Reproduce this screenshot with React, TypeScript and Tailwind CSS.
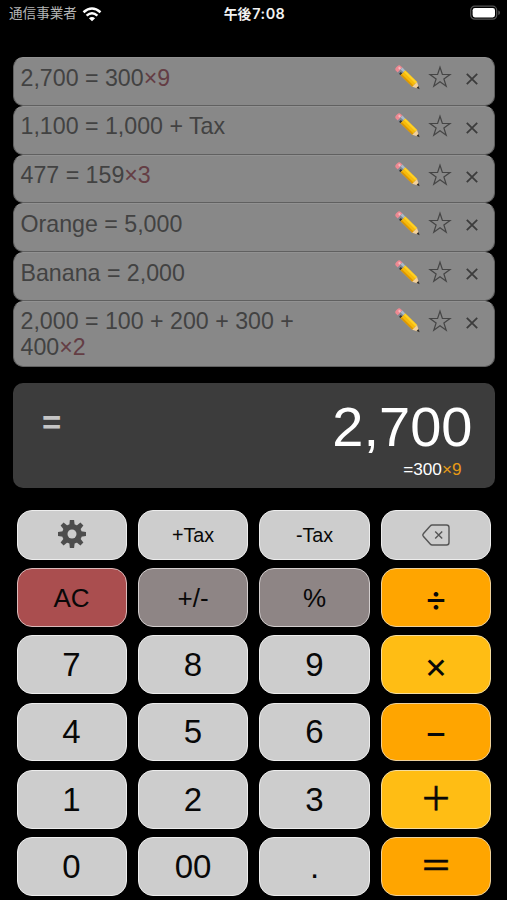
import type { ReactNode } from "react";

const jp = "font-['Liberation_Sans','Noto_Sans_CJK_JP',sans-serif]";

function Pencil() {
  return (
    <svg viewBox="0 0 26 26" className="h-[26px] w-[26px]" aria-hidden="true">
      <g transform="translate(2.2 2.2) rotate(44.5)">
        <path d="M2-3.4H4.5V3.4H2A2.5 2.5 0 0 1-.6.8V-.8A2.5 2.5 0 0 1 2-3.4Z" fill="#ed8992" />
        <path d="M1.2-1.8H3.5V0H1.2Z" fill="#f7bcc1" />
        <path d="M4-3.4H8V3.4H4Z" fill="#7e8792" />
        <path d="M4-3.4H8V-.8H4Z" fill="#a9b9c9" />
        <path d="M6 1H8V3.4H6Z" fill="#343434" />
        <path d="M8-3.4H24.5V3.4H8Z" fill="#f7bb0b" />
        <path d="M8-3.4H24.5V-1.2H8Z" fill="#ffd126" />
        <path d="M8 1.7H24.5V3.4H8Z" fill="#dc9704" />
        <path d="M24.5-3.4L31 0L24.5 3.4Z" fill="#f3d09a" />
        <path d="M28.4-1.4L31.5 0L28.4 1.4Z" fill="#292929" />
      </g>
    </svg>
  );
}

function Star() {
  return (
    <svg viewBox="0 0 24 24" className="h-6 w-6" fill="none" stroke="#454545" strokeWidth="1.2" aria-hidden="true">
      <path d="M12 2.2L14.4 9.5H22L15.9 14L18.2 21.2L12 16.8L5.8 21.2L8.1 14L2 9.5H9.6Z" />
    </svg>
  );
}

function HistoryRow({ children, tall = false }: { children: ReactNode; tall?: boolean }) {
  return (
    <div
      className={`flex rounded-[10px] border border-[#606060] border-t-[#929292] bg-[#888888] pl-[6.5px] ${
        tall ? "h-[66.5px]" : "h-[48.75px]"
      }`}
    >
      <div className="w-[300px] pt-[6.5px] text-[23.2px] leading-[26px] text-[#424242]">{children}</div>
      <div className="ml-auto flex h-[40px] items-start pr-[15.5px]">
        <div className="mt-[6.5px] mr-[7px]"><Pencil /></div>
        <div className="mt-[7px]"><Star /></div>
        <svg viewBox="0 0 12 12" className="mt-[15px] ml-[14px] h-[12px] w-[12px]" stroke="#3c3c3c" strokeWidth="1.8" aria-hidden="true">
          <path d="M.8.8L11.2 11.2M11.2.8L.8 11.2" />
        </svg>
      </div>
    </div>
  );
}

function Multiplier({ n }: { n: number }) {
  return <span className="text-[#643d44]">×{n}</span>;
}

function Key({ children, className = "" }: { children: ReactNode; className?: string }) {
  return (
    <button
      className={`flex items-center justify-center rounded-[15px] border-[1.5px] leading-none text-[#080808] ${className}`}
    >
      {children}
    </button>
  );
}

function Gear() {
  return (
    <svg viewBox="-15 -15 30 30" className="h-[30px] w-[30px]" fill="#4d4d4d" aria-hidden="true">
      {[0, 45, 90, 135].map((a) => (
        <path key={a} d="M-2.1-14H2.1L2.7-9V9L2.1 14H-2.1L-2.7 9V-9Z" transform={`rotate(${a})`} />
      ))}
      <circle r="10" />
      <circle r="4.5" fill="#cdcdcd" />
    </svg>
  );
}

function Backspace() {
  return (
    <svg viewBox="0 0 28 22" className="h-[22px] w-[28px]" fill="none" stroke="#555" strokeWidth="1.4" aria-hidden="true">
      <path d="M10.2 1H24.5Q27 1 27 3.5V18.5Q27 21 24.5 21H10.2Q9 21 8.2 20L1.3 12.2Q.4 11 1.3 9.8L8.2 2Q9 1 10.2 1Z" />
      <path d="M13.2 7.5L20.2 14.5M20.2 7.5L13.2 14.5" />
    </svg>
  );
}

const light = "border-[#ededed] bg-[#cdcdcd]";
const muted = "border-[#d2cdcd] bg-[#8e8585]";
const orange = "border-[#edd09b] bg-[#ffa500]";
const amber = "border-[#f4dc9e] bg-[#ffbd14]";
const digit = `${light} text-[33px]`;
const operator = "text-[36px] font-normal font-[Inter,sans-serif]";
const wide = "pb-[7px] text-[32px] [-webkit-text-stroke:0.6px_#080808] font-['Noto_Sans_CJK_JP',sans-serif]";

export default function App() {
  return (
    <main className={`h-[900px] w-[507px] overflow-hidden bg-black ${jp}`}>
      <header className="grid h-[57px] grid-cols-3 items-start pt-[4px] pr-[6px] pl-[9px] leading-[20px]">
        <div className="flex items-center text-[13.6px] text-[#b5b5b5]">
          <span>通信事業者</span>
          <svg viewBox="0 0 20 15" className="ml-[5px] h-[15px] w-[20px]" fill="none" stroke="#fff" strokeWidth="2.5" aria-hidden="true">
            <path d="M1.5 5.2Q10-2.3 18.5 5.2M4.6 8.6Q10 3.8 15.4 8.6" />
            <path d="M10 14.2L6.9 11.2Q10 8.6 13.1 11.2Z" fill="#fff" stroke="none" />
          </svg>
        </div>
        <div className="pr-[1px] text-center text-[13.8px] font-bold whitespace-nowrap text-[#f2f2f2] font-[Inter,'Noto_Sans_CJK_JP',sans-serif]">
          午後<span className="ml-[1px] text-[14.4px] font-semibold tracking-[0.5px]">7:08</span>
        </div>
        <svg viewBox="0 0 32 16" className="mt-[1px] h-4 w-8 justify-self-end" aria-hidden="true">
          <rect x="1.7" y="1.2" width="26" height="13" rx="4" fill="none" stroke="#555" strokeWidth="1.2" />
          <rect x="3.6" y="3" width="22.4" height="9.4" rx="2.3" fill="#fff" />
          <path d="M29.3 5.5Q31 6 31 7.7Q31 9.4 29.3 10Z" fill="#555" />
        </svg>
      </header>

      <section className="mr-[12.5px] ml-[13px]">
        <HistoryRow>2,700 = 300<Multiplier n={9} /></HistoryRow>
        <HistoryRow>1,100 = 1,000 + Tax</HistoryRow>
        <HistoryRow>477 = 159<Multiplier n={3} /></HistoryRow>
        <HistoryRow>Orange = 5,000</HistoryRow>
        <HistoryRow>Banana = 2,000</HistoryRow>
        <HistoryRow tall>2,000 = 100 + 200 + 300 + 400<Multiplier n={2} /></HistoryRow>
      </section>

      <section className="mt-[16px] mr-[12.5px] ml-[13px] flex h-[105px] justify-between rounded-[10px] bg-[#3c3c3c]">
        <div className="pt-[22px] pl-[29px] text-[33px] leading-[36px] font-bold text-[#c5c5c5]">=</div>
        <div className="flex flex-col items-end pt-[13px] text-white">
          <div className="pr-[22px] text-[56px] leading-[62px]">2,700</div>
          <div className="pr-[33px] text-[17.2px] leading-[22px]">
            =300<span className="text-[#e79a16]">×9</span>
          </div>
        </div>
      </section>

      <section className="mt-[21.5px] ml-[16.5px] grid w-[474.5px] grid-cols-4 grid-rows-[50px_58.8px_58.8px_58.8px_58.8px_58.8px] gap-x-[11.4px] gap-y-[8.4px]">
        <Key className={`${light} pb-[2px]`}><Gear /></Key>
        <Key className={`${light} pt-[3px] text-[19.7px]`}>+Tax</Key>
        <Key className={`${light} pt-[3px] text-[19.7px]`}>-Tax</Key>
        <Key className={light}><Backspace /></Key>

        <Key className="border-[#d9b9b9] bg-[#aa4e4f] text-[26px]">AC</Key>
        <Key className={`${muted} text-[26px]`}>+/-</Key>
        <Key className={`${muted} text-[26px]`}>%</Key>
        <Key className={`${orange} ${operator}`}>÷</Key>

        <Key className={digit}>7</Key>
        <Key className={digit}>8</Key>
        <Key className={digit}>9</Key>
        <Key className={`${amber} ${operator}`}>×</Key>

        <Key className={digit}>4</Key>
        <Key className={digit}>5</Key>
        <Key className={digit}>6</Key>
        <Key className={`${orange} ${operator}`}>−</Key>

        <Key className={digit}>1</Key>
        <Key className={digit}>2</Key>
        <Key className={digit}>3</Key>
        <Key className={`${amber} ${wide}`}>{"\uFF0B"}</Key>

        <Key className={digit}>0</Key>
        <Key className={digit}>00</Key>
        <Key className={digit}>.</Key>
        <Key className={`${orange} ${wide}`}>{"\uFF1D"}</Key>
      </section>
    </main>
  );
}
